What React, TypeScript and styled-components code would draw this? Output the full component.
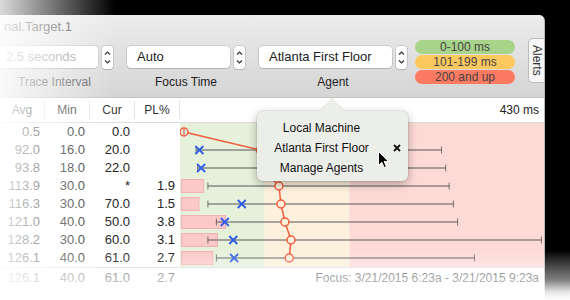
import React from "react";
import styled, { createGlobalStyle } from "styled-components";

interface Sample {
  avg: number;
  min: number;
  cur: number | null;
  max: number;
  pl: number | null;
}

const samples: Sample[] = [
  { avg: 0.5, min: 0, cur: 0, max: 1, pl: null },
  { avg: 92.0, min: 16, cur: 20, max: 306, pl: null },
  { avg: 93.8, min: 18, cur: 22, max: 311, pl: null },
  { avg: 113.9, min: 30, cur: null, max: 315, pl: 1.9 },
  { avg: 116.3, min: 30, cur: 70, max: 320, pl: 1.5 },
  { avg: 121.0, min: 40, cur: 50, max: 325, pl: 3.8 },
  { avg: 128.2, min: 30, cur: 60, max: 424, pl: 3.1 },
  { avg: 126.1, min: 40, cur: 61, max: 345, pl: 2.7 },
];

const zones = [
  { from: 0, to: 100, color: "#e5f1db" },
  { from: 100, to: 200, color: "#fdf0dc" },
  { from: 200, to: 430, color: "#fddad6" },
];

const CHART_W = 364;
const ROW_H = 18;
const SCALE = CHART_W / 430;
const px = (ms: number) => 2.5 + ms * SCALE;
const zoneColor = (ms: number) => (zones.find((z) => ms < z.to) || zones[2]).color;

const GlobalStyle = createGlobalStyle`
  html, body { margin: 0; padding: 0; background: #000; }
  body { font-family: "Liberation Sans", Arial, sans-serif; }
`;

const Stage = styled.div`
  position: relative;
  width: 570px;
  height: 300px;
  overflow: hidden;
  background: #000;
`;

const Window = styled.div`
  position: relative;
  margin-top: 15px;
  width: 545px;
  height: 285px;
  box-sizing: border-box;
  background: #fff;
  border-right: 1px solid #b8b8b8;
  border-top-right-radius: 6px;
  overflow: hidden;
  display: flex;
  flex-direction: column;
`;

const Chrome = styled.div`
  background: linear-gradient(#ececec, #d5d5d5);
  border-bottom: 1px solid #c2c2c2;
`;

const TitleBar = styled.div`
  height: 23px;
  line-height: 23px;
  padding-left: 4px;
  font-size: 13px;
  color: #4d4d4d;
`;

const Toolbar = styled.div`
  display: flex;
  align-items: flex-start;
  height: 59px;
`;

const Group = styled.div<{ $offset: number }>`
  display: flex;
  flex-direction: column;
  align-items: center;
  margin: 8px 0 0 ${({ $offset }) => $offset}px;
`;

const GroupRow = styled.div`
  display: flex;
  gap: 4px;
`;

const Field = styled.div<{ $width: number; $disabled?: boolean }>`
  width: ${({ $width }) => $width}px;
  height: 22px;
  box-sizing: border-box;
  padding-left: 10px;
  line-height: 22px;
  font-size: 13px;
  color: ${({ $disabled }) => ($disabled ? "#9a9a9a" : "#222")};
  background: #fff;
  border-radius: 4px;
  box-shadow: 0 0 0 0.5px rgba(0, 0, 0, 0.2), 0 1px 1px rgba(0, 0, 0, 0.1);
`;

const StepperBox = styled.div`
  width: 11px;
  height: 23px;
  background: #fff;
  border-radius: 3px;
  box-shadow: 0 0 0 0.5px rgba(0, 0, 0, 0.22), 0 1px 1px rgba(0, 0, 0, 0.1);
  svg {
    display: block;
  }
`;

const Label = styled.div<{ $disabled?: boolean }>`
  margin-top: 5px;
  line-height: 16px;
  font-size: 12px;
  color: ${({ $disabled }) => ($disabled ? "#555" : "#222")};
`;

const Legend = styled.div`
  display: flex;
  flex-direction: column;
  gap: 1px;
  margin: 2px 0 0 8px;
`;

const Pill = styled.div<{ $bg: string }>`
  width: 100px;
  height: 14px;
  line-height: 14px;
  border-radius: 7px;
  background: ${({ $bg }) => $bg};
  text-align: center;
  font-size: 12px;
  color: #444;
`;

const AlertsTab = styled.div`
  margin-left: 13px;
  width: 17px;
  height: 45px;
  box-sizing: border-box;
  display: flex;
  align-items: center;
  justify-content: center;
  background: #f6f6f6;
  border: 1px solid #bcbcbc;
  border-right: none;
  border-radius: 5px 0 0 5px;
  writing-mode: vertical-rl;
  font-size: 12px;
  color: #333;
`;

const HeaderRow = styled.div`
  display: flex;
  align-items: center;
  height: 24px;
  border-bottom: 1px solid #dcdcdc;
`;

const HeadCell = styled.div`
  width: 45px;
  height: 18px;
  box-sizing: border-box;
  border-right: 1px solid #e3e3e3;
  text-align: center;
  line-height: 18px;
  font-size: 12px;
  color: #333;
`;

const ScaleLabel = styled.div`
  flex: 1;
  text-align: right;
  padding-right: 5px;
  font-size: 12px;
  color: #222;
`;

const Body = styled.div`
  display: flex;
  height: ${ROW_H * samples.length}px;
`;

const NumCols = styled.div`
  width: 180px;
  display: flex;
  flex-direction: column;
`;

const NumRow = styled.div<{ $muted?: boolean }>`
  display: grid;
  grid-template-columns: repeat(4, 45px);
  height: ${ROW_H}px;
  line-height: ${ROW_H}px;
  font-size: 13px;
  color: ${({ $muted }) => ($muted ? "#666" : "#222")};
`;

const NumCell = styled.div`
  text-align: right;
  padding-right: 5px;
`;

const ChartSvg = styled.svg`
  display: block;
`;

const Footer = styled.div`
  display: flex;
  align-items: center;
  height: 20px;
  border-top: 1px solid #dcdcdc;
`;

const FocusText = styled.div`
  flex: 1;
  text-align: right;
  padding-right: 5px;
  font-size: 12px;
  color: #555;
`;

const Popover = styled.div`
  position: absolute;
  left: 257px;
  top: 96px;
  width: 151px;
  height: 70px;
  box-sizing: border-box;
  padding: 7px 0 3px;
  background: #eceeea;
  border-radius: 6px;
  box-shadow: 0 3px 10px rgba(0, 0, 0, 0.3), 0 0 0 0.5px rgba(0, 0, 0, 0.12);
  &::before {
    content: "";
    position: absolute;
    top: -9px;
    left: 66px;
    width: 18px;
    height: 18px;
    background: #eceeea;
    transform: rotate(45deg);
    box-shadow: -0.5px -0.5px 0 rgba(0, 0, 0, 0.1);
  }
`;

const MenuItem = styled.div`
  position: relative;
  display: flex;
  align-items: center;
  height: 20px;
  font-size: 12px;
  color: #111;
`;

const MenuLabel = styled.div`
  flex: 1;
  text-align: center;
`;

const MenuSlot = styled.div`
  width: 22px;
  display: flex;
  justify-content: center;
`;

const Cursor = styled.svg`
  position: absolute;
  left: 377px;
  top: 135px;
`;

const LeftFade = styled.div`
  position: absolute;
  top: 0;
  left: 0;
  bottom: 0;
  width: 115px;
  background: linear-gradient(to right, rgba(255, 255, 255, 0.86), rgba(255, 255, 255, 0));
  pointer-events: none;
`;

const BottomFade = styled.div`
  position: absolute;
  left: 0;
  right: 0;
  bottom: 0;
  height: 50px;
  background: linear-gradient(
    rgba(255, 255, 255, 0) 0%,
    rgba(255, 255, 255, 0.35) 40%,
    rgba(255, 255, 255, 0.5) 60%,
    rgba(255, 255, 255, 0.9) 84%,
    #fff 100%
  );
  pointer-events: none;
`;

const Stepper = () => (
  <StepperBox>
    <svg width="11" height="23" viewBox="0 0 11 23">
      <polyline points="3,8.5 5.5,6 8,8.5" fill="none" stroke="#333" strokeWidth="1.2" />
      <polyline points="3,14.5 5.5,17 8,14.5" fill="none" stroke="#333" strokeWidth="1.2" />
    </svg>
  </StepperBox>
);

const fmt = (v: number | null, empty = "") => (v === null ? empty : v.toFixed(1));

const Chart = () => {
  const cy = (i: number) => ROW_H / 2 + i * ROW_H;
  const avgPts = samples.map((s, i) => `${Math.max(px(s.avg), 4)},${cy(i)}`).join(" ");
  return (
    <ChartSvg width={CHART_W} height={ROW_H * samples.length}>
      {zones.map((z) => (
        <rect
          key={z.from}
          x={z.from * SCALE}
          y={0}
          width={(z.to - z.from) * SCALE}
          height={ROW_H * samples.length}
          fill={z.color}
        />
      ))}
      {samples.map((s, i) =>
        s.pl ? (
          <rect key={i} x={1.5} y={cy(i) - 6.5} width={s.pl * 11.6} height={13} fill="#fcc9c9" stroke="#f3b2b2" />
        ) : null
      )}
      {samples.map((s, i) => (
        <g key={i} stroke="rgba(100,100,100,0.55)">
          <line x1={px(s.min)} x2={px(s.max)} y1={cy(i)} y2={cy(i)} strokeWidth="2" />
          <line x1={px(s.min)} x2={px(s.min)} y1={cy(i) - 3.5} y2={cy(i) + 3.5} strokeWidth="1" stroke="rgba(80,80,80,0.75)" />
          <line x1={px(s.max)} x2={px(s.max)} y1={cy(i) - 3.5} y2={cy(i) + 3.5} strokeWidth="1" stroke="rgba(80,80,80,0.75)" />
        </g>
      ))}
      {samples.map((s, i) =>
        s.cur ? (
          <g key={i} stroke="#2f5ce6" strokeWidth="1.8">
            <line x1={px(s.cur) - 4} x2={px(s.cur) + 4} y1={cy(i) - 4} y2={cy(i) + 4} />
            <line x1={px(s.cur) - 4} x2={px(s.cur) + 4} y1={cy(i) + 4} y2={cy(i) - 4} />
          </g>
        ) : null
      )}
      <polyline points={avgPts} fill="none" stroke="#f35b3d" strokeWidth="1.5" />
      {samples.map((s, i) => (
        <circle
          key={i}
          cx={Math.max(px(s.avg), 4)}
          cy={cy(i)}
          r={4}
          fill={zoneColor(s.avg)}
          stroke="#f35b3d"
          strokeWidth="1.5"
        />
      ))}
      <line x1={4} x2={4} y1={cy(0) - 3} y2={cy(0) + 3} stroke="#c04a3a" strokeWidth="1" />
    </ChartSvg>
  );
};

const agents = ["Local Machine", "Atlanta First Floor", "Manage Agents"];

export default function App() {
  const last = samples[samples.length - 1];
  return (
    <Stage>
      <GlobalStyle />
      <Window>
        <Chrome>
          <TitleBar>nal.Target.1</TitleBar>
          <Toolbar>
            <Group $offset={-4}>
              <GroupRow>
                <Field $width={102} $disabled>
                  2.5 seconds
                </Field>
                <Stepper />
              </GroupRow>
              <Label $disabled>Trace Interval</Label>
            </Group>
            <Group $offset={14}>
              <GroupRow>
                <Field $width={103}>Auto</Field>
                <Stepper />
              </GroupRow>
              <Label>Focus Time</Label>
            </Group>
            <Group $offset={14}>
              <GroupRow>
                <Field $width={133}>Atlanta First Floor</Field>
                <Stepper />
              </GroupRow>
              <Label>Agent</Label>
            </Group>
            <Legend>
              <Pill $bg="#a8d48a">0-100 ms</Pill>
              <Pill $bg="#fdc95e">101-199 ms</Pill>
              <Pill $bg="#fc7a61">200 and up</Pill>
            </Legend>
            <AlertsTab>Alerts</AlertsTab>
          </Toolbar>
        </Chrome>
        <HeaderRow>
          <HeadCell>Avg</HeadCell>
          <HeadCell>Min</HeadCell>
          <HeadCell>Cur</HeadCell>
          <HeadCell>PL%</HeadCell>
          <ScaleLabel>430 ms</ScaleLabel>
        </HeaderRow>
        <Body>
          <NumCols>
            {samples.map((s, i) => (
              <NumRow key={i}>
                <NumCell>{fmt(s.avg)}</NumCell>
                <NumCell>{fmt(s.min)}</NumCell>
                <NumCell>{fmt(s.cur, "*")}</NumCell>
                <NumCell>{fmt(s.pl)}</NumCell>
              </NumRow>
            ))}
          </NumCols>
          <Chart />
        </Body>
        <Footer>
          <NumRow $muted>
            <NumCell>{fmt(last.avg)}</NumCell>
            <NumCell>{fmt(last.min)}</NumCell>
            <NumCell>{fmt(last.cur, "*")}</NumCell>
            <NumCell>{fmt(last.pl)}</NumCell>
          </NumRow>
          <FocusText>Focus: 3/21/2015 6:23a - 3/21/2015 9:23a</FocusText>
        </Footer>
        <Popover>
          {agents.map((a) => (
            <MenuItem key={a}>
              <MenuLabel>{a}</MenuLabel>
              <MenuSlot>
                {a === "Atlanta First Floor" && (
                  <svg width="8" height="8" viewBox="0 0 8 8">
                    <path d="M1 1L7 7M7 1L1 7" stroke="#111" strokeWidth="1.8" />
                  </svg>
                )}
              </MenuSlot>
            </MenuItem>
          ))}
        </Popover>
        <Cursor width="13" height="19" viewBox="0 0 13 19">
          <path
            d="M1.5 1.5 L1.5 15.5 L4.8 12.3 L7.2 17.6 L9.4 16.6 L7.1 11.4 L11.6 11.4 Z"
            fill="#000"
            stroke="#fff"
            strokeWidth="1"
            strokeLinejoin="round"
          />
        </Cursor>
      </Window>
      <LeftFade />
      <BottomFade />
    </Stage>
  );
}
